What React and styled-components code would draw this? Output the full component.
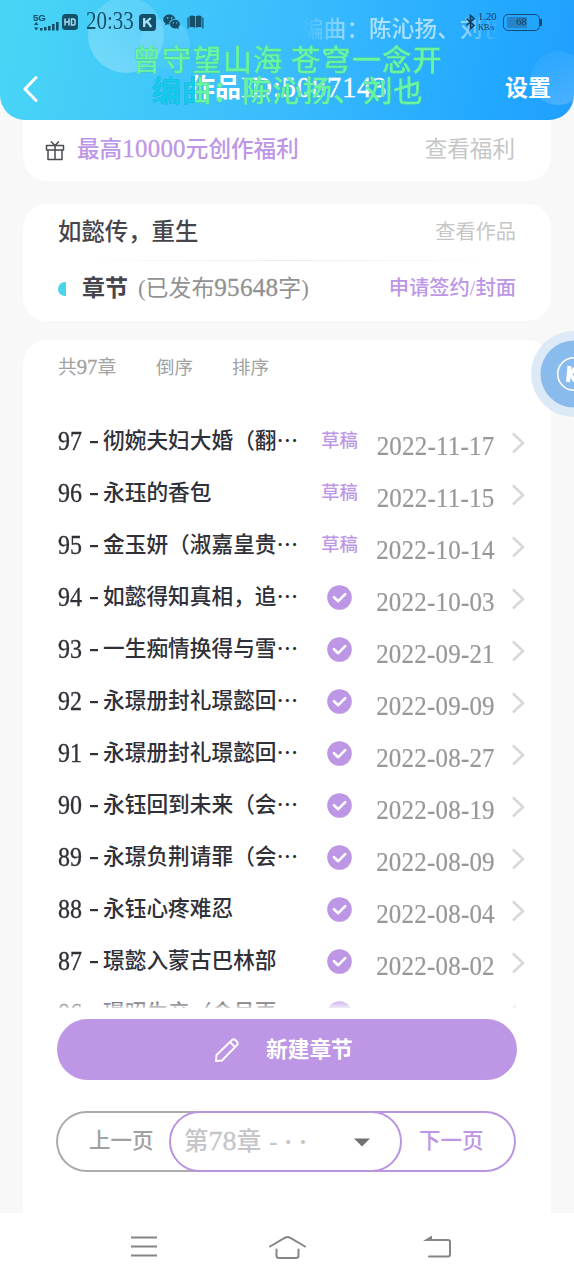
import React from "react";
import styled, { createGlobalStyle } from "styled-components";

const PURPLE = "#bd96e6";

const GlobalStyle = createGlobalStyle`
  * { box-sizing: border-box; }
  body {
    margin: 0;
    background: #f8f8f8;
    font-family: "Liberation Serif", "Noto Sans CJK SC", serif;
  }
`;

const Screen = styled.div`
  width: 574px;
  height: 1280px;
  position: relative;
  overflow: hidden;
  display: flex;
  flex-direction: column;
  background: #f8f8f8;
`;

const Label = styled.span`
  font-size: ${(p) => p.$size}px;
  line-height: 1.3;
  font-weight: ${(p) => p.$weight || 400};
  margin-left: ${(p) => p.$indent || 0}px;
  ${(p) => p.$width && `width: ${p.$width}px;`}
  color: ${(p) => p.$color};
  white-space: pre;
`;

const Digits = styled.span`
  font-size: ${(p) => p.$scale || 1.1}em;
  line-height: 1;
  font-weight: 400;
  letter-spacing: ${(p) => p.$track || 0}px;
  -webkit-text-stroke: 0.3px currentColor;
`;

/* ---------- header ---------- */
const Header = styled.header`
  height: 120px;
  flex: none;
  position: relative;
  z-index: 2;
  overflow: hidden;
  border-radius: 0 0 25px 25px;
  background: linear-gradient(103deg, #49d6f5 0%, #3bbdfd 48%, #22a8ff 85%, #219fff 100%);
`;

const Bubble = styled.i`
  position: absolute;
  left: ${(p) => p.$x - p.$r}px;
  top: ${(p) => p.$y - p.$r}px;
  width: ${(p) => p.$r * 2}px;
  height: ${(p) => p.$r * 2}px;
  border-radius: 50%;
  background: linear-gradient(${(p) => p.$angle || 25}deg, rgba(255, 255, 255, ${(p) => p.$from}), rgba(255, 255, 255, ${(p) => p.$to}));
`;

const StatusBar = styled.div`
  position: relative;
  height: 44px;
  display: flex;
  align-items: center;
  padding: 0 28px 0 32px;
  color: #15506b;
`;

const StatusIcons = styled.div`
  display: flex;
  align-items: center;
  gap: ${(p) => p.$gap}px;
  svg { display: block; flex: none; }
`;

const Clock = styled.span`
  width: 47px;
  font-size: 21px;
  line-height: 24px;
  margin: 0 6px 3px 8px;
  transform: scaleY(1.15);
`;

const Marquee = styled.div`
  width: 199px;
  margin-left: 97px;
  margin-top: 16px;
  overflow: hidden;
  white-space: nowrap;
  font-size: 22.5px;
  line-height: 32px;
  letter-spacing: 0.2px;
  font-weight: 500;
  color: rgba(255, 255, 255, 0.6);
  mask-image: linear-gradient(90deg, transparent, #000 28%, #000 78%, transparent);
`;

const Speed = styled.span`
  display: flex;
  flex-direction: column;
  font-size: 10.5px;
  line-height: 10px;
  width: 20px;
  small { font-size: 8.5px; line-height: 10px; letter-spacing: -0.3px; }
`;

const StatusEnd = styled.div`
  position: absolute;
  right: 34px;
  top: 11px;
  height: 22px;
  display: flex;
  align-items: center;
  gap: 2px;
  color: #123d62;
`;

const Battery = styled.span`
  position: relative;
  width: 37px;
  height: 17px;
  margin-left: 3px;
  border: 1px solid #174a73;
  border-radius: 5px;
  font-size: 10.5px;
  line-height: 14px;
  text-align: center;
  background: linear-gradient(90deg, #2784c6 66%, transparent 66%) 3px 2px / 31px 11px no-repeat;
  &::after {
    content: "";
    position: absolute;
    right: -3px;
    top: 4px;
    width: 2px;
    height: 7px;
    background: #174a73;
  }
`;

const TitleBar = styled.div`
  position: relative;
  height: 76px;
  padding: 13px 23px 0 22px;
  display: flex;
  align-items: center;
  justify-content: space-between;
  svg { display: block; }
`;

const Title = styled.h1`
  margin: 0 auto 0 151px;
  font-size: 26px;
  line-height: 32px;
  font-weight: 700;
  white-space: nowrap;
  color: #fff;
`;

const Lyric = styled.div`
  position: absolute;
  left: ${(p) => p.$left}px;
  top: ${(p) => p.$top}px;
  font-family: "Noto Sans CJK SC", sans-serif;
  font-size: 29px;
  line-height: 36px;
  letter-spacing: ${(p) => p.$track}px;
  white-space: pre;
  color: transparent;
  background: linear-gradient(90deg, #12cdf0 ${(p) => p.$sung}px, #6af5a4 ${(p) => p.$sung}px);
  background-clip: text;
  -webkit-background-clip: text;
  -webkit-text-stroke: 0.9px transparent;
  filter: drop-shadow(0 0 0.7px #168f9c);
`;

/* ---------- cards ---------- */
const Card = styled.section`
  width: 528px;
  margin: ${(p) => p.$gap}px 0 0 23px;
  height: ${(p) => p.$height}px;
  flex: none;
  background: #fff;
  border-radius: ${(p) => p.$radius || "24px"};
`;

const WelfareRow = styled.div`
  display: flex;
  align-items: center;
  height: 60px;
  padding: 0 36px 0 22px;
  svg { margin-right: 12px; }
  ${Label}:last-child { margin-left: auto; }
`;

const CardRow = styled.div`
  display: flex;
  align-items: center;
  height: ${(p) => p.$height}px;
  padding: 0 35px;
  ${Label}:last-child { margin-left: auto; }
`;

const Divider = styled.div`
  height: 1px;
  margin: 0 48px;
  background: linear-gradient(90deg, transparent, #ececee 50%, transparent);
`;

const HalfDot = styled.i`
  width: 8px;
  height: 14px;
  border-radius: 8px 0 0 8px;
  background: #48d4ed;
  margin-right: 16px;
`;

/* ---------- chapters ---------- */
const Panel = styled(Card)`
  display: flex;
  flex-direction: column;
  border-radius: 24px 24px 0 0;
`;

const ListTools = styled.div`
  display: flex;
  align-items: center;
  height: 54px;
  padding: 2px 0 0 35px;
`;

const ChapterList = styled.div`
  margin-top: 21px;
  height: 593px;
  overflow: hidden;
  position: relative;
  &::after {
    content: "";
    position: absolute;
    left: 0;
    right: 0;
    bottom: 0;
    height: 9px;
    background: linear-gradient(rgba(255, 255, 255, 0.1), rgba(255, 255, 255, 0.8));
  }
`;

const ChapterRow = styled.div`
  height: 52px;
  padding: 0 24px 0 35px;
  display: flex;
  align-items: center;
  svg { display: block; flex: none; }
`;

const ChapterTitle = styled.span`
  width: 250px;
  display: flex;
  align-items: center;
  white-space: pre;
  font-size: 21.7px;
  line-height: 30px;
  font-weight: 500;
  color: #303039;
`;

const Number = styled.span`
  width: 45px;
  display: flex;
  align-items: center;
  font-weight: 400;
  font-size: 24px;
  margin-bottom: 1px;
  transform: scaleY(1.1);
  -webkit-text-stroke: 0.3px currentColor;
  &::after {
    content: "";
    width: 8px;
    height: 2px;
    margin: 2px 0 0 8px;
    background: currentColor;
  }
`;

const State = styled.span`
  width: 63px;
  display: flex;
  justify-content: center;
  font-size: 18.3px;
  line-height: 24px;
  font-weight: 500;
  color: ${PURPLE};
`;

const DateText = styled.span`
  margin: 10px 0 0 4px;
  width: 121px;
  text-align: center;
  font-size: 25px;
  line-height: 28px;
  letter-spacing: 0.2px;
  color: #989898;
  -webkit-text-stroke: 0.2px currentColor;
  transform: scaleY(1.12);
`;

const RowArrow = styled.span`
  margin: 3px 0 0 auto;
  transform: translateX(-1px);
`;

/* ---------- bottom controls ---------- */
const CreateButton = styled.button`
  margin: 11px 0 0 34px;
  width: 460px;
  height: 61px;
  flex: none;
  border: 0;
  padding: 1px 0 0 156px;
  border-radius: 31px;
  background: ${PURPLE};
  display: flex;
  align-items: center;
  gap: 25px;
  font-family: inherit;
`;

const Pager = styled.div`
  margin: 31px 0 0 33px;
  width: 460px;
  height: 61px;
  flex: none;
  display: flex;
`;

const PageButton = styled.div`
  width: ${(p) => p.$width}px;
  border: 2px solid ${(p) => p.$line};
  border-radius: ${(p) => (p.$end ? "0 31px 31px 0" : "31px 0 0 31px")};
  border-${(p) => (p.$end ? "left" : "right")}: 0;
  margin-${(p) => (p.$end ? "left" : "right")}: -34px;
  padding: 1px 0 0 ${(p) => p.$inset}px;
  display: flex;
  align-items: center;
`;

const ChapterSelect = styled.div`
  position: relative;
  width: 233px;
  border: 2px solid #b995e0;
  border-radius: 31px;
  background: #fff;
  display: flex;
  align-items: center;
  justify-content: space-between;
  padding: 1px 30px 0 13px;
`;

const Ellipsis = styled.span`
  margin-left: 8px;
  font-size: 25px;
  font-weight: 700;
  line-height: 1;
  letter-spacing: 6.5px;
`;

const NavBar = styled.nav`
  height: 67px;
  flex: none;
  background: #fff;
  display: flex;
  align-items: center;
  padding-left: 130px;
  gap: 110px;
`;

const FloatButton = styled.div`
  position: absolute;
  left: 531px;
  top: 331px;
  z-index: 3;
`;

const chapters = [
  ["97", "彻婉夫妇大婚（翻⋯", "2022-11-17", true],
  ["96", "永珏的香包", "2022-11-15", true],
  ["95", "金玉妍（淑嘉皇贵⋯", "2022-10-14", true],
  ["94", "如懿得知真相，追⋯", "2022-10-03"],
  ["93", "一生痴情换得与雪⋯", "2022-09-21"],
  ["92", "永璟册封礼璟懿回⋯", "2022-09-09"],
  ["91", "永璟册封礼璟懿回⋯", "2022-08-27"],
  ["90", "永钰回到未来（会⋯", "2022-08-19"],
  ["89", "永璟负荆请罪（会⋯", "2022-08-09"],
  ["88", "永钰心疼难忍", "2022-08-04"],
  ["87", "璟懿入蒙古巴林部", "2022-08-02"],
  ["86", "璟昭生产（令号更", ""],
];

const Check = () => (
  <svg width="25" height="25" viewBox="0 0 25 25">
    <circle cx="12.5" cy="12.5" r="12.3" fill={PURPLE} />
    <path d="M7 12.2l4.2 4 7-7" fill="none" stroke="#fff" strokeWidth="2.6" strokeLinecap="round" strokeLinejoin="round" />
  </svg>
);

const SignalIcon = () => (
  <svg width="27" height="18" viewBox="0 0 27 18" fill="currentColor">
    <text x="1" y="7.5" fontFamily="Liberation Sans, sans-serif" fontWeight="700" fontSize="9.6">5G</text>
    <path d="M2 12l2.2-3 2.2 3zM2 14.5l2.2 3 2.2-3zM8 15h2.6v2.5H8zM12 14h2.6v3.5H12zM16 13h2.6v4.5H16zM20 11h2.6v6.5H20zM24 9h2.6v8.5H24z" />
  </svg>
);

const HdIcon = () => (
  <svg width="16" height="16" viewBox="0 0 16 16">
    <rect width="16" height="16" rx="3.5" fill="currentColor" />
    <path d="M3 4.5v7M7 4.5v7M3 8h4M9.5 5v6H11c1.4 0 2-.8 2-1.6V6.6c0-.9-.6-1.6-2-1.6z" fill="none" stroke="#a0def5" strokeWidth="1.5" />
  </svg>
);

const KIcon = () => (
  <svg width="17" height="17" viewBox="0 0 17 17">
    <rect width="17" height="17" rx="3.5" fill="currentColor" />
    <path d="M5.2 4v9M11.8 4L6 9M8.2 7.5l4 5.5" fill="none" stroke="#a8e2fb" strokeWidth="2.3" />
  </svg>
);

const WechatIcon = () => (
  <svg width="17" height="16" viewBox="0 0 17 16">
    <path d="M6.5.5C3 .5.3 2.6.3 5.5c0 1.7.9 3 2.3 3.9L2 11.5l2.4-1.2 2 .3C6 7 8.5 4.7 12.4 4.7 11.7 2.2 9.3.5 6.5.5z" fill="currentColor" />
    <path d="M12 5.7c-2.8 0-5 1.9-5 4.3s2.2 4.4 5 4.4l1.7-.2 2 1-.5-1.7c1.1-.9 1.7-2.1 1.7-3.5 0-2.4-2.2-4.3-4.9-4.3z" fill="currentColor" />
    <path d="M4 4h1.3M8 4h1.3M9.8 8.8H11M13.2 8.8h1.2" stroke="#55c5f8" strokeWidth="1.3" />
  </svg>
);

const BookIcon = () => (
  <svg width="17" height="14" viewBox="0 0 17 14" fill="currentColor">
    <path d="M2.5 1c2-.9 4-.8 5.6.3v11.5c-1.6-1-3.6-1.1-5.6-.5zM8.9 1.3C10.5.2 12.5.1 14.5 1v11.3c-2-.6-4-.5-5.6.5zM.5 2.500h1.200v11H.5zM15.300 2.500h1.200v11h-1.200z" />
  </svg>
);

export default function App() {
  return (
    <Screen>
      <GlobalStyle />
      <Header>
        <Bubble $x={165} $y={44} $r={25} $from={0.02} $to={0.14} />
        <Bubble $x={126} $y={35} $r={38} $from={0.27} $to={0.1} />
        <Bubble $x={558} $y={78} $r={27} $from={0.02} $to={0.2} $angle={150} />
        <StatusBar>
          <StatusIcons $gap={3}>
            <SignalIcon />
            <HdIcon />
          </StatusIcons>
          <Clock>20:33</Clock>
          <StatusIcons $gap={7}>
            <KIcon />
            <WechatIcon />
            <BookIcon />
          </StatusIcons>
          <Marquee>编曲：陈沁扬、刘也</Marquee>
          <StatusEnd>
            <svg width="11" height="16" viewBox="0 0 11 16" fill="none" stroke="currentColor" strokeWidth="1.6">
              <path d="M1.5 4.5l7.5 7-3.5 3V1.5L9 4.5l-7.5 7" />
            </svg>
            <Speed>1.20<small>KB/s</small></Speed>
            <Battery>68</Battery>
          </StatusEnd>
        </StatusBar>
        <TitleBar>
          <svg width="16" height="28" viewBox="0 0 16 28" fill="none" stroke="#fff" strokeWidth="3" strokeLinecap="round" strokeLinejoin="round">
            <path d="M14 2.5L3 14l11 11.5" />
          </svg>
          <Title>作品<Digits $scale={1.1} $track={0.8}>ID:5087143</Digits></Title>
          <Label $size={23} $weight={700} $color="#fff">设置</Label>
        </TitleBar>
        <Lyric $left={132} $top={40} $track={1.3} $sung={0}>曾守望山海 苍穹一念开</Lyric>
        <Lyric $left={152} $top={71} $track={1.2} $sung={43}>编曲：陈沁扬、刘也</Lyric>
      </Header>

      <Card $gap={0} $height={61} $radius="0 0 24px 24px">
        <WelfareRow>
          <svg width="20" height="21" viewBox="0 0 20 21" fill="none" stroke="#4a4a50" strokeWidth="1.5" strokeLinejoin="round">
            <path d="M1.5 5.5h17v4.5h-17zM3 10v9.5h14V10M10 5.5v14M10 5.5L6 1.5M10 5.5l4-4" />
          </svg>
          <Label $size={22.6} $weight={500} $color={PURPLE}>最高<Digits $track={0.3}>10000</Digits>元创作福利</Label>
          <Label $size={22.6} $color="#c6c6c6">查看福利</Label>
        </WelfareRow>
      </Card>

      <Card $gap={23} $height={117}>
        <CardRow $height={56}>
          <Label $size={23.4} $weight={500} $color="#45454b">如懿传，重生</Label>
          <Label $size={20.2} $color="#c6c6c6">查看作品</Label>
        </CardRow>
        <Divider />
        <CardRow $height={55}>
          <HalfDot />
          <Label $size={23} $weight={700} $color="#45454b">章节</Label>
          <Label $size={22.9} $indent={10} $color="#929292">(已发布<Digits $track={0.2}>95648</Digits>字)</Label>
          <Label $size={20.3} $weight={500} $color={PURPLE}>申请签约/封面</Label>
        </CardRow>
      </Card>

      <Panel $gap={19} $height={873}>
        <ListTools>
          <Label $size={18.8} $width={98} $color="#a2a2a2">共<Digits>97</Digits>章</Label>
          <Label $size={18.5} $width={76} $color="#a2a2a2">倒序</Label>
          <Label $size={18.5} $color="#a2a2a2">排序</Label>
        </ListTools>
        <ChapterList>
          {chapters.map(([no, title, date, draft]) => (
            <ChapterRow key={no}>
              <ChapterTitle><Number>{no}</Number>{title}</ChapterTitle>
              <State>{draft ? "草稿" : <Check />}</State>
              <DateText>{date}</DateText>
              <RowArrow>
                <svg width="15" height="22" viewBox="0 0 15 22" fill="none" stroke="#d8d8d8" strokeWidth="2.6">
                  <path d="M2 1.5l10 9.5L2 20.5" />
                </svg>
              </RowArrow>
            </ChapterRow>
          ))}
        </ChapterList>
        <CreateButton>
          <svg width="28" height="28" viewBox="0 0 28 28" fill="none" stroke="#fff" strokeWidth="1.9" strokeLinejoin="round">
            <path d="M3 25l.5-6L19 4c1-1 2.3-1 3.3 0l1.7 1.7c1 1 1 2.3 0 3.3L9 24.5zM17 6l5 5" />
          </svg>
          <Label $size={21.7} $weight={700} $color="#fff">新建章节</Label>
        </CreateButton>
        <Pager>
          <PageButton $width={147} $line="#ababab" $inset={31}>
            <Label $size={21.5} $weight={500} $color="#a0a0a0">上一页</Label>
          </PageButton>
          <ChapterSelect>
            <Label $size={24.5} $weight={500} $color="#c5c5ca">第<Digits $scale={1.15}>78</Digits>章<Ellipsis>-··</Ellipsis></Label>
            <svg width="16" height="9" viewBox="0 0 16 9"><path d="M0 .5h16L8 8.5z" fill="#707070" /></svg>
          </ChapterSelect>
          <PageButton $end $width={148} $line="#b995e0" $inset={51}>
            <Label $size={21.5} $weight={500} $color={PURPLE}>下一页</Label>
          </PageButton>
        </Pager>
      </Panel>

      <NavBar>
        <svg width="28" height="24" viewBox="0 0 28 24" stroke="#858585" strokeWidth="2">
          <path d="M1 2.5h26M1 11.5h26M1 20.5h26" />
        </svg>
        <svg width="39" height="26" viewBox="0 0 39 26" fill="none" stroke="#858585" strokeWidth="2" strokeLinecap="round">
          <path d="M2 12.5L17.5 3.5q2-1 4 0l15.5 9M8.5 15.5v6q0 2.500 2.500 2.500h17q2.500 0 2.500-2.500v-6" />
        </svg>
        <svg width="30" height="26" viewBox="-6 0 30 26" overflow="visible" fill="none" stroke="#858585" strokeWidth="2" strokeLinecap="round">
          <path d="M4 6h21q2 0 2 2v12.5q0 2-2 2H6" />
          <path d="M0 7l9-5.5V7z" fill="#858585" stroke="none" />
        </svg>
      </NavBar>

      <FloatButton>
        <svg width="43" height="86" viewBox="0 0 43 86">
          <circle cx="43" cy="43" r="43" fill="#dce9f7" />
          <circle cx="43" cy="43" r="33.5" fill="#8abbed" />
          <circle cx="43" cy="43" r="16.3" fill="none" stroke="#fff" strokeWidth="1.6" />
          <path d="M38.5 35l-1.5 16M47 34.5L39 43l6 8" fill="none" stroke="#fff" strokeWidth="4" />
        </svg>
      </FloatButton>
    </Screen>
  );
}
